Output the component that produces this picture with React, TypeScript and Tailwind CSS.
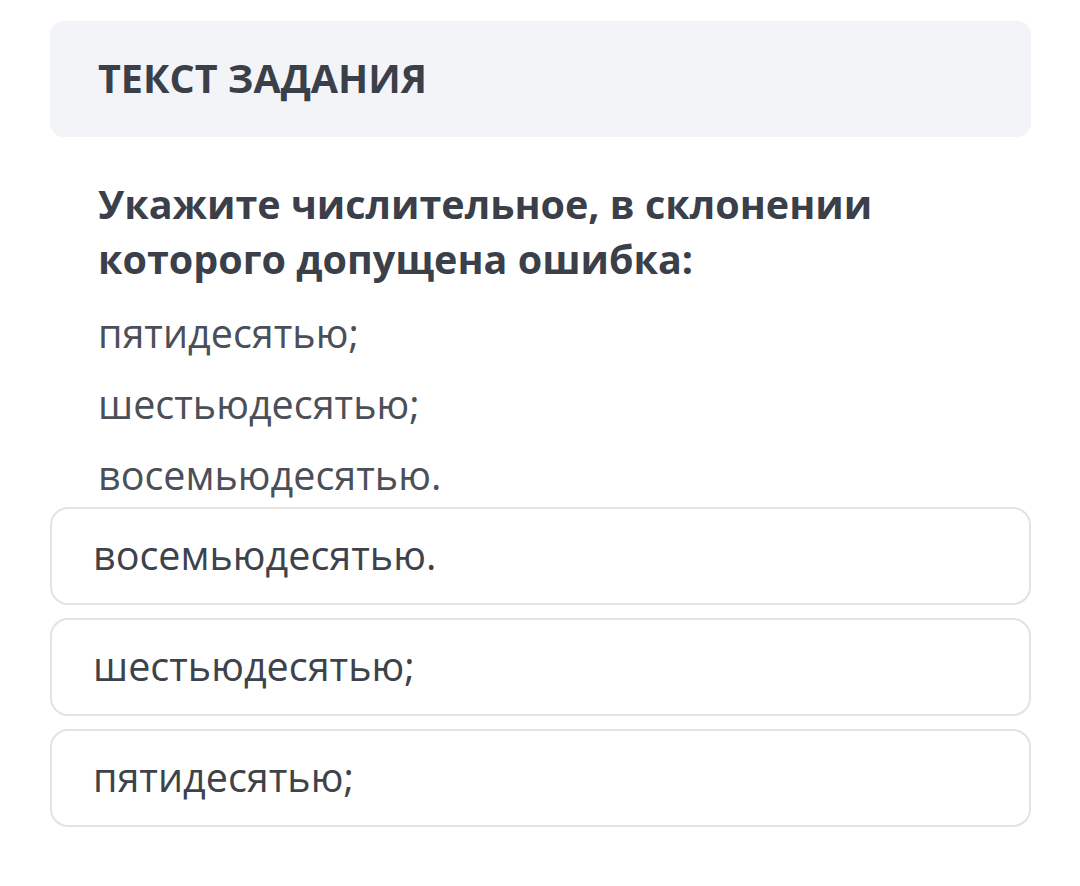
export default function App() {
  const lines = ["пятидесятью;", "шестьюдесятью;", "восемьюдесятью."];
  const answers = ["восемьюдесятью.", "шестьюдесятью;", "пятидесятью;"];

  return (
    <div className="min-h-[886px] w-[1080px] bg-white pl-[50px] pr-[49px] pt-[21px] font-['Open_Sans',sans-serif] text-[#3b404a]">
      <div className="flex h-[116px] items-center rounded-[14px] bg-[#f2f4f8] pl-[48px]">
        <h1 className="text-[39.5px] font-bold leading-none text-[#3a3f49]">ТЕКСТ ЗАДАНИЯ</h1>
      </div>

      <div className="pl-[48px] pt-[40px]">
        <p className="w-[880px] text-[39.5px] font-bold leading-[55px] text-[#3a3f49]">
          Укажите числительное, в склонении которого допущена ошибка:
        </p>
        <div className="mt-[11px]">
          {lines.map((l) => (
            <p key={l} className="text-[39.5px] leading-[71px] text-[#4a4f58]">
              {l}
            </p>
          ))}
        </div>
      </div>

      <div className="-mt-[4px] flex flex-col gap-[13px]">
        {answers.map((a) => (
          <div
            key={a}
            className="flex h-[98px] items-center rounded-[18px] border-2 border-[#e3e3e3] pl-[41px] text-[39.5px] text-[#3d424b]"
          >
            {a}
          </div>
        ))}
      </div>
    </div>
  );
}
